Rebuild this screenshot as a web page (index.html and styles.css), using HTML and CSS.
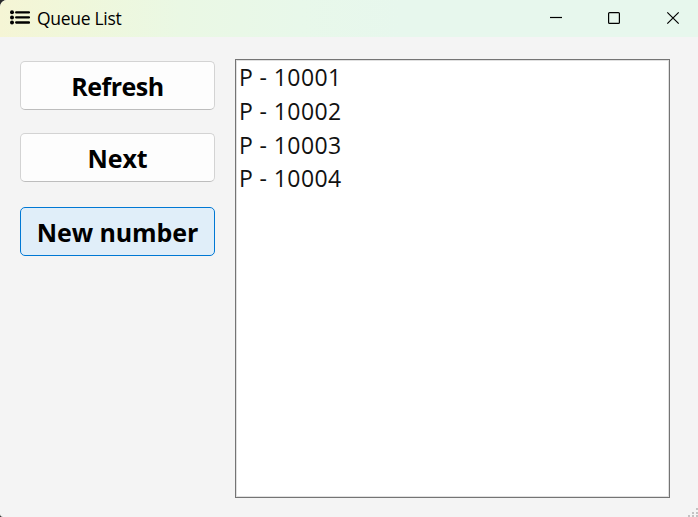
FILE: index.html
```html
<!DOCTYPE html>
<html lang="en">
<head>
<meta charset="utf-8">
<title>Queue List</title>
<link rel="stylesheet" href="styles.css">
</head>
<body>
<div class="window">
  <header class="titlebar">
    <svg class="app-icon" width="20" height="15" viewBox="0 0 20 15">
      <circle cx="2" cy="2.2" r="2"/><circle cx="2" cy="7.4" r="2"/><circle cx="2" cy="12.6" r="2"/>
      <path d="M6.2 2.4H19M6.2 7.4H19M6.2 12.5H19" stroke="#000" stroke-width="2.3" stroke-linecap="round"/>
    </svg>
    <span class="title">Queue List</span>
    <div class="controls">
      <svg width="58" height="37" viewBox="0 0 58 37"><path d="M20 17.5H32"/></svg>
      <svg width="58" height="37" viewBox="0 0 58 37"><rect x="20.6" y="12.6" width="10.8" height="10.8" rx="1"/></svg>
      <svg width="58" height="37" viewBox="0 0 58 37"><path d="M21.3 12.3L32.7 23.7M32.7 12.3L21.3 23.7"/></svg>
    </div>
  </header>
  <main class="content">
    <div class="actions">
      <button class="btn refresh">Refresh</button>
      <button class="btn">Next</button>
      <button class="btn active">New number</button>
    </div>
    <ul class="list">
      <li>P - 10001</li>
      <li>P - 10002</li>
      <li>P - 10003</li>
      <li>P - 10004</li>
    </ul>
  </main>
  <svg class="grip" width="10" height="10" viewBox="0 0 10 10"><path d="M8 1h2v2H8zM4 5h2v2H4zM8 5h2v2H8zM0 8h2v2H0zM4 8h2v2H4zM8 8h2v2H8z"/></svg>
</div>
</body>
</html>
```
FILE: styles.css
```css
* { box-sizing: border-box; }
body { margin: 0; background: #29292b; font-family: "Open Sans", "Noto Sans", sans-serif; color: #000; }
.window { position: relative; display: flex; flex-direction: column; width: 698px; height: 517px; background: #f4f4f4; border-radius: 7px 0 0 3px; overflow: hidden; }
.titlebar { display: flex; align-items: center; flex: none; height: 37px; padding-left: 10px; background: linear-gradient(90deg, #f5f5d5 0, #f0f7da 70px, #eaf8e4 180px, #e8f8ea 300px, #e7f7ed 400px, #e7f7ed 100%); }
.app-icon { margin-top: -3px; }
.title { margin: -2px 0 0 7px; font-size: 17.5px; line-height: 24px; letter-spacing: -0.3px; }
.controls { display: flex; margin-left: auto; margin-right: -6px; }
.controls svg { fill: none; stroke: #000; stroke-width: 1.2; }
.content { display: flex; flex: 1; gap: 20px; padding: 22px 28px 19px 20px; }
.actions { display: flex; flex-direction: column; gap: 24px; width: 195px; padding-top: 2px; }
.btn { display: flex; align-items: center; justify-content: center; height: 49px; padding: 0; border: 1px solid #d3d3d3; border-bottom-color: #bdbdbd; border-radius: 5px; background: #fdfdfd; color: #000; font: bold 25px/34px "Open Sans", sans-serif; letter-spacing: -0.1px; white-space: nowrap; }
.refresh { margin-bottom: -1px; letter-spacing: -0.5px; }
.btn.active { margin-top: 1px; border-color: #0078d4; background: #e0eef9; }
.list { flex: 1; margin: 0; padding: 1px 3px; border: 1px solid #747474; box-shadow: inset 0 0 0 1px #e0e0e0; background: #fff; list-style: none; color: #111; font-size: 23px; line-height: 33.8px; letter-spacing: 0.4px; }
.grip { position: absolute; right: 0; bottom: 0; fill: #c3c3c3; }
```
